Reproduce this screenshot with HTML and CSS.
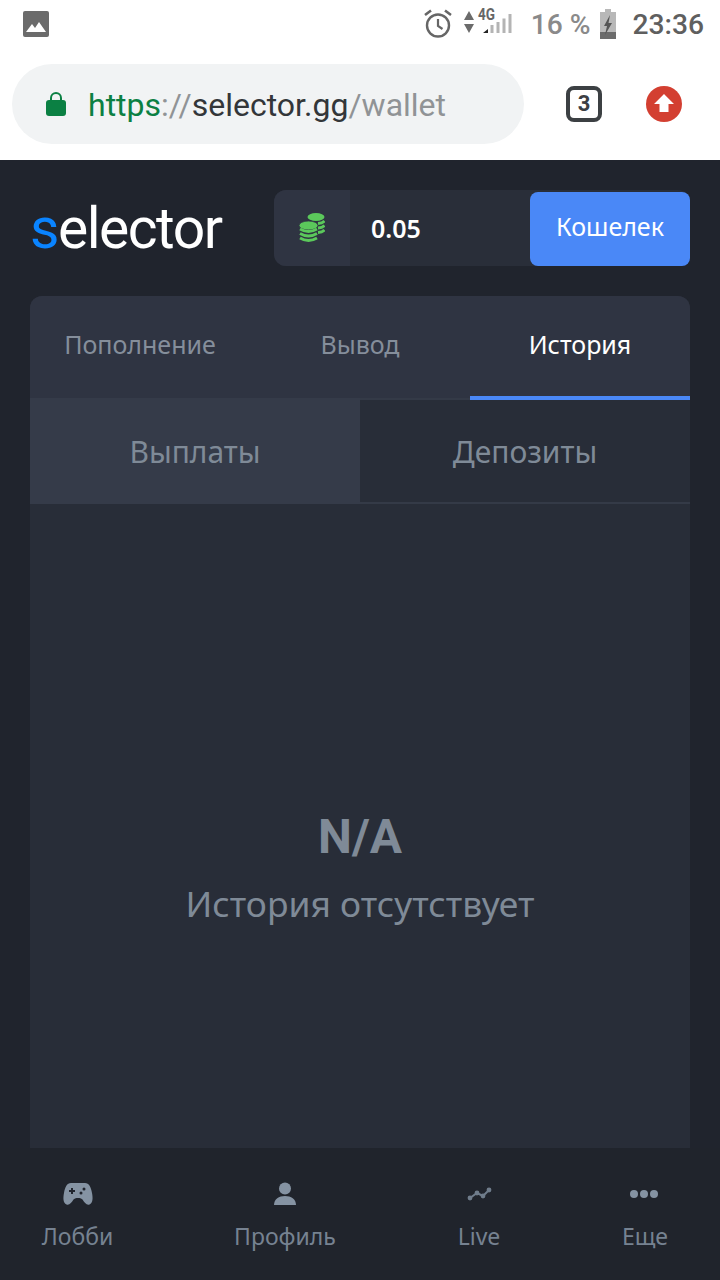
FILE: index.html
```html
<!DOCTYPE html>
<html lang="ru">
<head>
	<meta charset="UTF-8">
	<title>Selector</title>
	<link rel="stylesheet" href="styles.css">
</head>
<body>
	<div class="chrome">
		<div class="status">
			<svg class="pic" width="26" height="26" viewBox="0 0 26 26"><rect width="26" height="26" rx="2" fill="#6b6b6b"/><path d="M3 21l6-8 3 4 4-6 7 10z" fill="#fff"/></svg>
			<div class="status-right">
				<svg class="alarm" width="28" height="30" viewBox="0 0 28 30" fill="none" stroke="#666"><circle cx="14" cy="16.500" r="11" stroke-width="2.400"/><path d="M14 10v7l4.500 3" stroke-width="2.200"/><path d="M1 6l6-4.500M27 6l-6-4.500" stroke-width="2.600"/></svg>
				<svg class="signal" width="50" height="40" viewBox="0 0 50 40"><path d="M6 7l5 9H1zM6 29l5-9H1z" fill="#6b6b6b"/><path d="M20 29l5-4v4z" fill="#222"/><path d="M27.500 21h3v8h-3zM33.500 18h3v11h-3zM39.500 14.500h3V29h-3zM45.500 10h3v19h-3z" fill="#b4b4b4"/><text x="15" y="16" class="four-g" textLength="17" lengthAdjust="spacingAndGlyphs">4G</text></svg>
				<span class="pct">16 %</span>
				<svg class="batt" width="16" height="30" viewBox="0 0 16 30"><path d="M5 0h6v3h5v27H0V3h5z" fill="#b8b8b8"/><path d="M0 23h16v7H0z" fill="#6b6b6b"/><path d="M10 6L4 17h3l-2 9 7-12H8.500z" fill="#555"/></svg>
				<span class="clock">23:36</span>
			</div>
		</div>
		<div class="urlrow">
			<div class="urlbar">
				<svg class="lock" width="20" height="28" viewBox="0 0 20 28"><path d="M5 11V8a5 5 0 0 1 10 0v3" fill="none" stroke="#0b8043" stroke-width="2"/><rect y="10" width="20" height="16" rx="3" fill="#0b8043"/></svg>
				<span class="url"><span class="u-green">https</span><span class="u-gray">://</span>selector.gg<span class="u-gray">/wallet</span></span>
			</div>
			<span class="tabcount">3</span>
			<svg class="update" width="36" height="36" viewBox="0 0 36 36"><circle cx="18" cy="18" r="18" fill="#d33f31"/><path d="M18 8l10 10h-5.500v8h-9v-8H8z" fill="#fff"/></svg>
		</div>
	</div>

	<div class="page">
		<header class="top">
			<div class="logo"><span class="logo-s">s</span>elector</div>
			<div class="balance">
				<div class="coin">
					<svg width="26" height="32" viewBox="0 0 26 32" fill="none" stroke="#5bc85b" stroke-width="2.800">
						<ellipse cx="17" cy="5" rx="8.500" ry="4" fill="#5bc85b" stroke="none"/>
						<path d="M19 11.500q4.500-.3 6.500-2.500M19 16q4.500-.3 6.500-2.500M19 20.500q4.500-.3 6.500-2.500"/>
						<ellipse cx="9.500" cy="13.500" rx="9.500" ry="4.500" fill="#5bc85b" stroke="#2f3442" stroke-width=".8"/>
						<path d="M1 17q8.500 5 17 0M1 21.500q8.500 5 17 0M1 26q8.500 5 17 0"/>
					</svg>
				</div>
				<div class="amount">0.05</div>
				<button class="wallet-btn">Кошелек</button>
			</div>
		</header>

		<section class="card">
			<nav class="tabs">
				<div class="tab">Пополнение</div>
				<div class="tab">Вывод</div>
				<div class="tab act">История</div>
			</nav>
			<div class="subtabs">
				<div class="subtab act">Выплаты</div>
				<div class="subtab">Депозиты</div>
			</div>
			<div class="empty">
				<div class="na">N/A</div>
				<div class="empty-text">История отсутствует</div>
			</div>
		</section>
	</div>

	<footer class="bottom">
		<div class="item item-lobby">
			<svg width="30" height="24" viewBox="0 0 30 24"><path d="M8 1h14c4 0 6 4 7 10 1 5 1 10-2.500 11.500-3 1-5-2-7-5-1-1-2-1.500-3-1.500h-3c-1 0-2 .5-3 1.500-2 3-4 6-7 5C0 21 0 16 1 11 2 5 4 1 8 1z" fill="#8593a3"/><path d="M9 6v6M6 9h6" stroke="#21252e" stroke-width="2"/><circle cx="21" cy="7" r="1.500" fill="#21252e"/><circle cx="18" cy="11" r="1.500" fill="#21252e"/></svg>
			<span>Лобби</span>
		</div>
		<div class="item item-profile">
			<svg width="24" height="24" viewBox="0 0 24 24" fill="#8593a3"><circle cx="12" cy="6.500" r="6"/><path d="M1 23c0-6 5-9 11-9s11 3 11 9z"/></svg>
			<span>Профиль</span>
		</div>
		<div class="item item-live">
			<svg width="26" height="24" viewBox="0 0 26 24" fill="#6f7c8b"><path d="M4 16l7-5 6 3 6-6" fill="none" stroke="#6f7c8b" stroke-width="2"/><circle cx="4" cy="16" r="2.400"/><circle cx="11" cy="11" r="2.400"/><circle cx="17" cy="14" r="2.400"/><circle cx="23" cy="8" r="2.400"/></svg>
			<span>Live</span>
		</div>
		<div class="item item-more">
			<svg class="more-dots" width="28" height="24" viewBox="0 0 28 24" fill="#8593a3"><circle cx="4" cy="12" r="4"/><circle cx="14" cy="12" r="4"/><circle cx="24" cy="12" r="4"/></svg>
			<span>Еще</span>
		</div>
	</footer>
</body>
</html>
```
FILE: styles.css
```css
* {
	box-sizing: border-box;
}
html, body {
	margin: 0;
	padding: 0;
}
body {
	width: 720px;
	height: 1280px;
	overflow: hidden;
	display: flex;
	flex-direction: column;
	background: #20242d;
	font-family: "Noto Sans", sans-serif;
}

/* browser chrome */
.chrome {
	height: 160px;
	background: #fff;
	font-family: Roboto, sans-serif;
}
.status {
	height: 50px;
	display: flex;
	justify-content: space-between;
	align-items: center;
	padding: 0 16px 2px 23px;
}
.status-right {
	display: flex;
	align-items: center;
}
.alarm {
	margin-right: 11px;
}
.signal {
	margin-right: 18px;
}
.four-g {
	font: bold 16px Roboto, sans-serif;
	fill: #666;
}
.pct {
	font-size: 28.2px;
	font-weight: 500;
	color: #8a8a8a;
	margin-right: 10px;
}
.batt {
	margin-right: 16px;
}
.clock {
	font-size: 28.2px;
	font-weight: 500;
	color: #5f5f5f;
}
.urlrow {
	display: flex;
	align-items: center;
	height: 80px;
	margin-top: 14px;
	padding-left: 12px;
}
.urlbar {
	width: 512px;
	height: 80px;
	border-radius: 40px;
	background: #f1f3f4;
	display: flex;
	align-items: center;
	padding-left: 34px;
}
.lock {
	margin-right: 22px;
}
.url {
	font-size: 32px;
	color: #333639;
	padding-top: 2px;
}
.u-green {
	color: #0b8043;
}
.u-gray {
	color: #909396;
}
.tabcount {
	width: 36px;
	height: 36px;
	margin-left: 42px;
	border: 4px solid #3c4043;
	border-radius: 8px;
	font-size: 22px;
	font-weight: 700;
	line-height: 28px;
	text-align: center;
	color: #3c4043;
}
.update {
	margin-left: 44px;
}

/* page */
.page {
	flex: 1;
	min-height: 0;
	display: flex;
	flex-direction: column;
	padding: 30px 30px 0;
}
.top {
	display: flex;
	justify-content: space-between;
	align-items: center;
	height: 76px;
	flex-shrink: 0;
}
.logo {
	font-family: Roboto, sans-serif;
	font-size: 57px;
	letter-spacing: -1.500px;
	color: #fff;
}
.logo-s {
	color: #0a84ff;
}
.balance {
	width: 416px;
	height: 76px;
	display: flex;
	align-items: center;
	background: #292e39;
	border-radius: 12px;
}
.coin {
	width: 76px;
	height: 76px;
	display: flex;
	align-items: center;
	justify-content: center;
	background: #2f3442;
	border-radius: 12px 0 0 12px;
}
.amount {
	flex: 1;
	padding-left: 21px;
	font-size: 25px;
	font-weight: 600;
	color: #fff;
}
.wallet-btn {
	width: 160px;
	height: 74px;
	margin-top: 2px;
	padding-bottom: 8px;
	border: 0;
	border-radius: 8px;
	background: #4a88f7;
	color: #fff;
	font-family: "Noto Sans", sans-serif;
	font-size: 25px;
}

/* card */
.card {
	flex: 1;
	min-height: 0;
	margin-top: 30px;
	display: flex;
	flex-direction: column;
	background: #282d38;
	border-radius: 12px 12px 0 0;
}
.tabs {
	display: flex;
	height: 104px;
	background: #2f3442;
	border-radius: 12px 12px 0 0;
	box-shadow: inset 0 -2px 0 #343a47;
}
.tab {
	flex: 1;
	display: flex;
	align-items: center;
	justify-content: center;
	padding-bottom: 4px;
	font-size: 25px;
	color: #858e9b;
	border-bottom: 4px solid transparent;
}
.tab.act {
	color: #fff;
	border-bottom-color: #4a88f7;
}
.subtabs {
	display: flex;
	height: 104px;
	border-bottom: 2px solid #343a47;
}
.subtab {
	flex: 1;
	display: flex;
	align-items: center;
	justify-content: center;
	font-size: 30px;
	color: #7f8a97;
}
.subtab.act {
	margin: -2px 0;
	background: #353b49;
}
.empty {
	flex: 1;
	display: flex;
	flex-direction: column;
	align-items: center;
	padding-top: 304px;
}
.na {
	font-family: Roboto, sans-serif;
	font-size: 48px;
	font-weight: 700;
	color: #7f8a97;
}
.empty-text {
	margin-top: 14px;
	font-size: 35.400px;
	color: #7f8a97;
}

/* bottom nav */
.bottom {
	height: 132px;
	flex-shrink: 0;
	display: flex;
	background: #20242c;
	font-size: 23px;
	color: #768291;
}
.item {
	display: flex;
	flex-direction: column;
	align-items: center;
	gap: 14px;
	padding-top: 34px;
}
.item-lobby {
	width: 155px;
}
.item-profile {
	width: 260px;
}
.item-live {
	width: 128px;
}
.item-more {
	width: 177px;
	padding-left: 27px;
}
.more-dots {
	margin-right: 3px;
}
```
